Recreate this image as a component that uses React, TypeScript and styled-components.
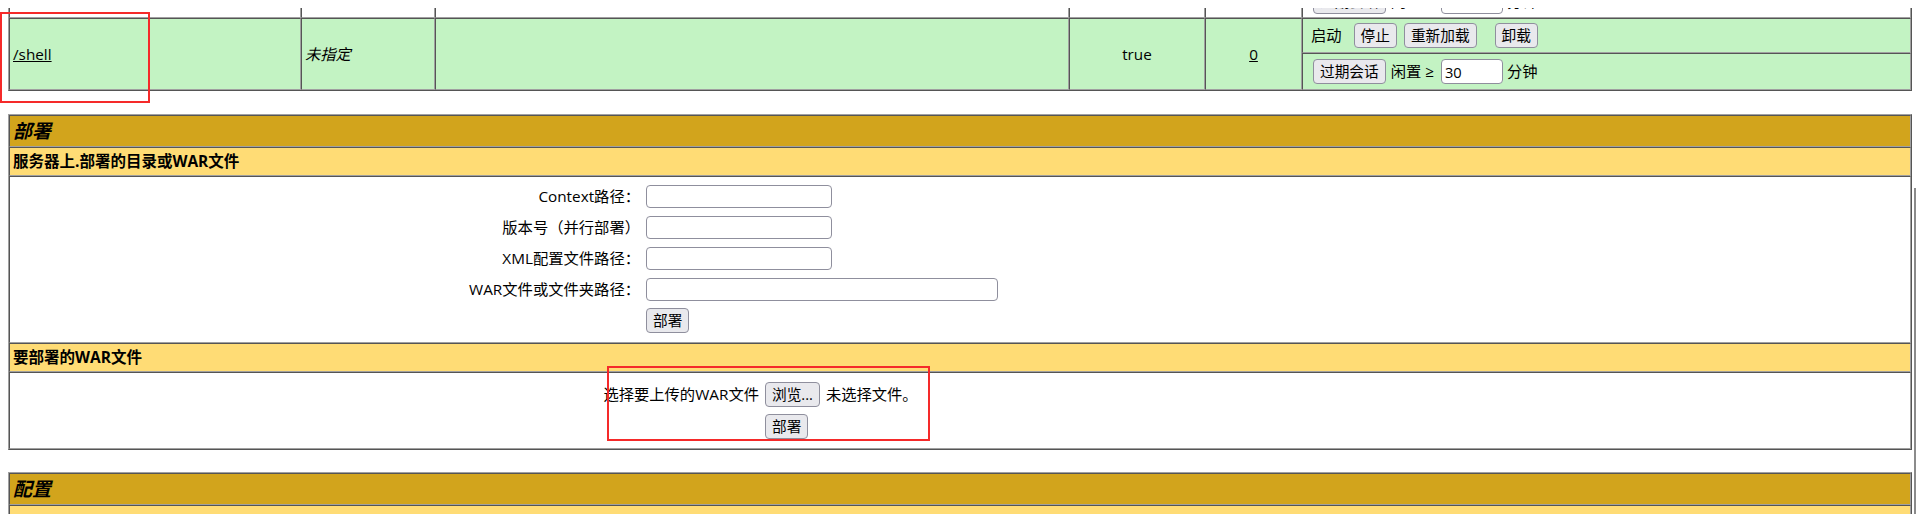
import React from 'react'
import styled, { createGlobalStyle } from 'styled-components'

const GlobalStyle = createGlobalStyle`
  html, body {
    overflow: hidden;
    background: #fff;
  }
  body {
    margin: 8px;
    font-family: 'Open Sans', 'Noto Sans CJK SC', sans-serif;
    font-size: 15.3px;
    color: #000;
  }
`

const Grid = styled.table<{ $mt: number }>`
  width: 100%;
  margin-top: ${(p) => p.$mt}px;
  border-collapse: separate;
  border-spacing: 0;
  border: 1px solid;
  border-color: #a0a0a0 #555 #555 #a0a0a0;
  table-layout: fixed;
`

const Cell = styled.td<{ $bg?: string; $align?: string; $italic?: boolean }>`
  border: 1px solid;
  border-color: #555 #a0a0a0 #a0a0a0 #555;
  padding: 3px;
  background: ${(p) => p.$bg || '#fff'};
  text-align: ${(p) => p.$align || 'left'};
  font-style: ${(p) => (p.$italic ? 'italic' : 'normal')};
  vertical-align: middle;
  line-height: 21px;
  white-space: nowrap;
`

const Title = styled(Cell)`
  background: #d2a41c;
  font-size: 19px;
  font-weight: 700;
  font-style: italic;
  line-height: 24px;
`

const SubHeader = styled(Cell)`
  background: #ffdc75;
  font-size: 15.5px;
  font-weight: 700;
`

const Link = styled.a`
  color: #000;
  text-decoration: underline;
`

const Commands = styled.div<{ $h: number; $pt?: number }>`
  box-sizing: border-box;
  display: flex;
  align-items: center;
  height: ${(p) => p.$h}px;
  padding-top: ${(p) => p.$pt ?? 0}px;
`

const Text = styled.span<{ $ml?: number }>`
  margin-left: ${(p) => p.$ml ?? 0}px;
`

const Btn = styled.button<{ $ml?: number }>`
  font-family: inherit;
  font-size: 14.67px;
  line-height: 21px;
  padding: 1px 6px;
  margin: 0 0 0 ${(p) => p.$ml ?? 0}px;
  background: #e9e9ed;
  border: 1px solid #8f8f9d;
  border-radius: 4px;
  color: #000;
`

const TextInput = styled.input<{ $w: number; $h?: number; $ml?: number }>`
  box-sizing: border-box;
  width: ${(p) => p.$w}px;
  height: ${(p) => p.$h ?? 23}px;
  margin: 0 0 0 ${(p) => p.$ml ?? 0}px;
  padding: 0 3px;
  border: 1px solid #8f8f9d;
  border-radius: 4px;
  background: #fff;
  font-family: inherit;
  font-size: 14.67px;
  color: #000;
`

const FormGrid = styled.div<{ $label: number; $row: number; $pt: number; $pb: number }>`
  display: grid;
  grid-template-columns: ${(p) => p.$label}px 1fr;
  grid-auto-rows: ${(p) => p.$row}px;
  align-items: center;
  padding: ${(p) => p.$pt}px 0 ${(p) => p.$pb}px;
`

const Label = styled.div`
  text-align: right;
  padding: 0 3px;
  white-space: nowrap;
`

const Field = styled.div`
  display: flex;
  align-items: center;
  padding: 0 3px;
  white-space: nowrap;
`

const Annotation = styled.div<{ $x: number; $y: number; $w: number; $h: number }>`
  position: fixed;
  left: ${(p) => p.$x}px;
  top: ${(p) => p.$y}px;
  width: ${(p) => p.$w}px;
  height: ${(p) => p.$h}px;
  box-sizing: border-box;
  border: 2px solid #f52a2a;
  pointer-events: none;
`

const ScrollThumb = styled.div`
  position: fixed;
  left: 1914px;
  top: 188px;
  width: 2px;
  height: 340px;
  background: #8b8b8b;
`

const GREEN = '#c3f3c3'

const SessionRow = ({ pt = 0 }: { pt?: number }) => (
  <Commands $h={29} $pt={pt}>
    <Btn $ml={7}>过期会话</Btn>
    <Text $ml={5}>闲置 ≥</Text>
    <TextInput $w={62} $h={25} $ml={7} defaultValue="30" />
    <Text $ml={4}>分钟</Text>
  </Commands>
)

const AppsTable = () => (
  <Grid $mt={-28}>
    <colgroup>
      <col style={{ width: 292 }} />
      <col style={{ width: 134 }} />
      <col style={{ width: 634 }} />
      <col style={{ width: 136 }} />
      <col style={{ width: 97 }} />
      <col />
    </colgroup>
    <tbody>
      <tr>
        <Cell />
        <Cell />
        <Cell />
        <Cell />
        <Cell />
        <Cell>
          <SessionRow pt={4} />
        </Cell>
      </tr>
      <tr>
        <Cell $bg={GREEN} rowSpan={2}>
          <Link href="#">/shell</Link>
        </Cell>
        <Cell $bg={GREEN} rowSpan={2} $italic>
          未指定
        </Cell>
        <Cell $bg={GREEN} rowSpan={2} />
        <Cell $bg={GREEN} rowSpan={2} $align="center">
          true
        </Cell>
        <Cell $bg={GREEN} rowSpan={2} $align="center">
          <Link href="#">0</Link>
        </Cell>
        <Cell $bg={GREEN}>
          <Commands $h={27}>
            <Text $ml={5}>启动</Text>
            <Btn $ml={12}>停止</Btn>
            <Btn $ml={7}>重新加载</Btn>
            <Btn $ml={18}>卸载</Btn>
          </Commands>
        </Cell>
      </tr>
      <tr>
        <Cell $bg={GREEN}>
          <SessionRow />
        </Cell>
      </tr>
    </tbody>
  </Grid>
)

const DeployTable = () => (
  <Grid $mt={23}>
    <tbody>
      <tr>
        <Title>部署</Title>
      </tr>
      <tr>
        <SubHeader>服务器上.部署的目录或WAR文件</SubHeader>
      </tr>
      <tr>
        <Cell>
          <FormGrid $label={630} $row={31} $pt={1} $pb={3}>
            <Label>Context路径：</Label>
            <Field>
              <TextInput $w={186} />
            </Field>
            <Label>版本号（并行部署）</Label>
            <Field>
              <TextInput $w={186} />
            </Field>
            <Label>XML配置文件路径：</Label>
            <Field>
              <TextInput $w={186} />
            </Field>
            <Label>WAR文件或文件夹路径：</Label>
            <Field>
              <TextInput $w={352} />
            </Field>
            <Label>&nbsp;</Label>
            <Field>
              <Btn>部署</Btn>
            </Field>
          </FormGrid>
        </Cell>
      </tr>
      <tr>
        <SubHeader>要部署的WAR文件</SubHeader>
      </tr>
      <tr>
        <Cell>
          <FormGrid $label={749} $row={32} $pt={2} $pb={3}>
            <Label>选择要上传的WAR文件</Label>
            <Field>
              <Btn>浏览...</Btn>
              <Text $ml={6}>未选择文件。</Text>
            </Field>
            <Label>&nbsp;</Label>
            <Field>
              <Btn>部署</Btn>
            </Field>
          </FormGrid>
        </Cell>
      </tr>
    </tbody>
  </Grid>
)

const ConfigTable = () => (
  <Grid $mt={22}>
    <tbody>
      <tr>
        <Title>配置</Title>
      </tr>
      <tr>
        <SubHeader>&nbsp;</SubHeader>
      </tr>
    </tbody>
  </Grid>
)

const App = () => {
  return (
    <>
      <GlobalStyle />
      <AppsTable />
      <DeployTable />
      <ConfigTable />
      <Annotation $x={0} $y={12} $w={150} $h={91} />
      <Annotation $x={607} $y={366} $w={323} $h={75} />
      <ScrollThumb />
    </>
  )
}

export default App
